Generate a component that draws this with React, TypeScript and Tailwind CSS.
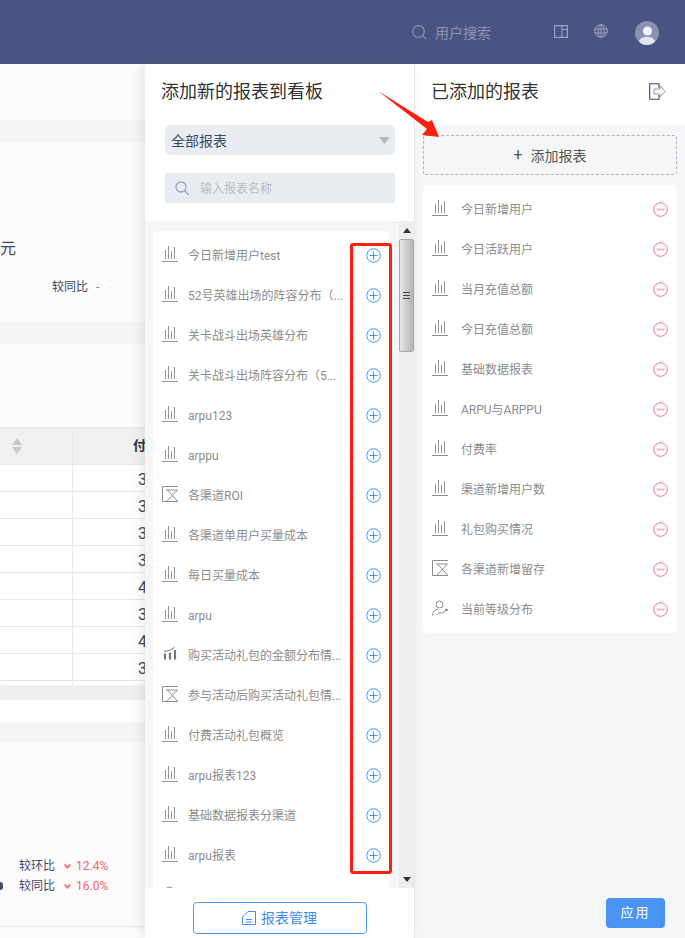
import React from "react";

const font = { fontFamily: 'Roboto, "Noto Sans CJK SC", sans-serif' };

const Bars = () => (
  <svg width="16" height="16" viewBox="0 0 16 16" fill="none" stroke="#949494" strokeWidth="1" className="mb-[2px] shrink-0">
    <path d="M0 15.5H16M3.5 4V13M6.5 0V13M9.5 5V13M12.5 1V13" />
  </svg>
);
const Hourglass = () => (
  <svg width="16" height="16" viewBox="0 0 16 16" fill="none" stroke="#8c8c8c" strokeWidth="1" className="mb-[2px] shrink-0">
    <path d="M16 .5H.5V15.5H16M4 4H15.5M5.5 4L15.5 15M15.5 4L5 15" />
  </svg>
);
const SmallBars = () => (
  <svg width="16" height="16" viewBox="0 0 16 16" fill="none" className="mb-[2px] shrink-0">
    <path d="M3 7.5V13.5M8 6.5V13.5M13 4V13.5" stroke="#777" strokeWidth="2.2" />
    <path d="M2 5.5C6 5 9 4 12.5 1.5" stroke="#777" strokeWidth="1" />
  </svg>
);
const Person = () => (
  <svg width="16" height="16" viewBox="0 0 16 16" fill="none" stroke="#8c8c8c" strokeWidth="1" className="mb-[2px] shrink-0">
    <circle cx="7.5" cy="4.5" r="3.5" />
    <path d="M.5 15.5C.8 11.5 3 9.5 6 9" />
    <path d="M5 15L8 12L10 13.5L13.5 10.5" />
    <circle cx="14.5" cy="10" r="1" fill="#8c8c8c" />
  </svg>
);

const AddIcon = () => (
  <svg width="15" height="15" viewBox="0 0 15 15" fill="none" stroke="#3f95ff" className="shrink-0">
    <circle cx="7.5" cy="7.5" r="6.8" />
    <path d="M3.5 7.5H11.5M7.5 3.5V11.5" strokeWidth="1.2" />
  </svg>
);
const RemoveIcon = () => (
  <svg width="15" height="15" viewBox="0 0 15 15" fill="none" className="shrink-0">
    <circle cx="7.5" cy="7.5" r="6.8" stroke="#fb7478" />
    <path d="M3.5 7.5H11.5" stroke="#fba9ab" strokeWidth="1.6" />
  </svg>
);
const Chevron = () => (
  <svg width="7" height="5" viewBox="0 0 7 5" className="shrink-0">
    <path d="M0 1L1.2 0L3.5 2.2L5.8 0L7 1L3.5 5Z" fill="#f5656a" />
  </svg>
);

type Row = { text: string; icon: React.ReactNode };
const left: Row[] = [
  { text: "今日新增用户test", icon: <Bars /> },
  { text: "52号英雄出场的阵容分布（...", icon: <Bars /> },
  { text: "关卡战斗出场英雄分布", icon: <Bars /> },
  { text: "关卡战斗出场阵容分布（5...", icon: <Bars /> },
  { text: "arpu123", icon: <Bars /> },
  { text: "arppu", icon: <Bars /> },
  { text: "各渠道ROI", icon: <Hourglass /> },
  { text: "各渠道单用户买量成本", icon: <Bars /> },
  { text: "每日买量成本", icon: <Bars /> },
  { text: "arpu", icon: <Bars /> },
  { text: "购买活动礼包的金额分布情...", icon: <SmallBars /> },
  { text: "参与活动后购买活动礼包情...", icon: <Hourglass /> },
  { text: "付费活动礼包概览", icon: <Bars /> },
  { text: "arpu报表123", icon: <Bars /> },
  { text: "基础数据报表分渠道", icon: <Bars /> },
  { text: "arpu报表", icon: <Bars /> },
  { text: "", icon: <Person /> },
];
const right: Row[] = [
  { text: "今日新增用户", icon: <Bars /> },
  { text: "今日活跃用户", icon: <Bars /> },
  { text: "当月充值总额", icon: <Bars /> },
  { text: "今日充值总额", icon: <Bars /> },
  { text: "基础数据报表", icon: <Bars /> },
  { text: "ARPU与ARPPU", icon: <Bars /> },
  { text: "付费率", icon: <Bars /> },
  { text: "渠道新增用户数", icon: <Bars /> },
  { text: "礼包购买情况", icon: <Bars /> },
  { text: "各渠道新增留存", icon: <Hourglass /> },
  { text: "当前等级分布", icon: <Person /> },
];
const nums = ["3", "3", "3", "3", "4", "3", "4", "3"];

function Background() {
  return (
    <div className="w-[145px] shrink-0 overflow-hidden bg-[#fbfbfc] text-[12px] text-[#3d4a66]">
      <div className="h-[56px]" />
      <div className="h-[22px] bg-[#f5f5f6]" />
      <div className="flex h-[180px] flex-col">
        <div className="mt-[95px] h-[24px] text-[16px] leading-[24px] text-[#3d4a66]">元</div>
        <div className="mt-[18px] flex items-center pl-[52px] leading-[16px]">
          较同比<span className="ml-[8px] text-[#2fb574]">-</span>
        </div>
      </div>
      <div className="h-[22px] bg-[#f5f5f6]" />
      <div className="h-[83px]" />
      <div className="flex h-[38px] border-y border-[#e8e8e8] bg-[#f0f0f0]">
        <div className="flex w-[73px] items-center justify-start border-r border-[#e8e8e8] pl-[12px]">
          <svg width="10" height="16" viewBox="0 0 10 16"><path d="M0 7L5 0L10 7ZM0 9H10L5 16Z" fill="#c8c8c8" /></svg>
        </div>
        <div className="flex w-[72px] items-center justify-end whitespace-nowrap text-[13px] font-bold text-[#333]">
          <span className="mr-[-1px]">付</span>
        </div>
      </div>
      {nums.map((n, i) => (
        <div key={i} className="flex h-[27px] border-b border-[#e8e8e8] bg-white">
          <div className="w-[73px] border-r border-[#e8e8e8]" />
          <div className="flex w-[72px] items-center justify-end pt-[4px] text-[16px] text-[#3d4a66]">
            <span className="mr-[-2px]">{n}</span>
          </div>
        </div>
      ))}
      <div className="flex h-[4px] bg-white shadow-[0_2px_4px_rgba(0,0,0,0.15)]">
        <div className="w-[73px] border-r border-[#e8e8e8]" />
      </div>
      <div className="h-[15px] bg-[#efefef]" />
      <div className="h-[22px] bg-[#fdfdfd]" />
      <div className="h-[20px] bg-[#f5f5f6]" />
      <div className="flex h-[185px] flex-col border-b border-[#e3ebf8]">
        <div className="mt-[114px] flex h-[20px] items-center pl-[19px]">
          <span className="w-[45px]">较环比</span>
          <Chevron />
          <span className="ml-[5px] text-[#f5656a]">12.4%</span>
        </div>
        <div className="flex h-[20px] items-center">
          <span className="mr-[16px] h-[8px] w-[3px] rounded-r-full bg-[#3d4a66]" />
          <span className="w-[45px]">较同比</span>
          <Chevron />
          <span className="ml-[5px] text-[#f5656a]">16.0%</span>
        </div>
      </div>
    </div>
  );
}

function Scrollbar() {
  return (
    <div className="flex w-[15px] shrink-0 flex-col items-center bg-[#eeeeee]">
      <div className="flex h-[18px] items-center justify-center text-[0]">
        <svg width="8" height="5" viewBox="0 0 8 5"><path d="M0 5L4 0L8 5Z" fill="#333" /></svg>
      </div>
      <div className="flex h-[113px] w-[15px] items-center justify-center rounded-[2px] border border-[#a8a8a8] bg-[linear-gradient(90deg,#e8e8e8,#d0d0d0_45%,#b4b4b4)]">
        <svg width="7" height="7" viewBox="0 0 7 7" stroke="#444"><path d="M0 .5H7M0 3.5H7M0 6.5H7" /></svg>
      </div>
      <div className="flex-1" />
      <div className="mb-[2px] flex h-[14px] items-center justify-center text-[0]">
        <svg width="8" height="5" viewBox="0 0 8 5"><path d="M0 0L4 5L8 0Z" fill="#333" /></svg>
      </div>
    </div>
  );
}

function MiddlePanel() {
  return (
    <div className="z-10 flex w-[270px] shrink-0 flex-col overflow-hidden border-r border-[#e6e6e6] bg-white shadow-[-4px_0_10px_rgba(0,0,0,0.08)]">
      <div className="flex h-[157px] shrink-0 flex-col pl-[16px] pr-[15px]">
        <div className="mt-[15px] h-[26px] text-[18px] leading-[26px] text-[#333]">添加新的报表到看板</div>
        <div className="mx-[4px] mt-[20px] flex h-[30px] items-center justify-between rounded-[5px] bg-[#e9ecf0] pl-[6px] pr-[5px] text-[14px] text-[#3d4a66]">
          <span className="pt-[2px]">全部报表</span>
          <svg width="11" height="7" viewBox="0 0 11 7"><path d="M0 0H11L5.5 7Z" fill="#b4b8be" /></svg>
        </div>
        <div className="mx-[4px] mt-[18px] flex h-[30px] items-center gap-[10px] rounded-[2px] bg-[#e9ecf0] pl-[10px] text-[12px] text-[#b9bcc2]">
          <svg width="15" height="15" viewBox="0 0 15 15" fill="none" stroke="#95a7c6" strokeWidth="1.3"><circle cx="6" cy="6" r="5" /><path d="M9.8 9.8L14 14" /></svg>
          <span className="pt-[2px]">输入报表名称</span>
        </div>
      </div>
      <div className="flex h-[667px] shrink-0 overflow-hidden bg-[#f5f6f8] pl-[8px]">
        <div className="mr-[10px] mt-[10px] w-[236px] shrink-0 rounded-t-[5px] bg-white pt-[4px]">
          {left.map((r, i) => (
            <div key={i} className="flex h-[40px] items-center pl-[9px]">
              {r.icon}
              <span className="ml-[10px] w-[160px] whitespace-nowrap pt-[2px] text-[12px] text-[#8c8c8c]">{r.text}</span>
              {i < 16 && <span className="ml-[18px] flex"><AddIcon /></span>}
            </div>
          ))}
        </div>
        <Scrollbar />
      </div>
      <div className="flex flex-1 items-start justify-center pt-[14px]">
        <div className="flex h-[32px] w-[174px] items-center justify-center gap-[5px] rounded-[4px] border border-[#4d9bf8] text-[14px] text-[#3d8df2]">
          <svg width="14" height="14" viewBox="0 0 14 14" fill="none" stroke="#3d8df2"><path d="M.5 13.5V6L6 .5H13.5V13.5ZM4 8.5H10M4 11H10" /></svg>
          报表管理
        </div>
      </div>
    </div>
  );
}

function RightPanel() {
  return (
    <div className="flex w-[270px] shrink-0 flex-col bg-[#f5f6f8]">
      <div className="flex h-[61px] shrink-0 items-start justify-between bg-white pl-[16px] pr-[19px] pt-[15px]">
        <span className="text-[18px] leading-[26px] text-[#333]">已添加的报表</span>
        <svg width="17" height="17" viewBox="0 0 17 17" fill="none" className="mt-[4px]" stroke="#3d4a66">
          <path d="M10 5V.7H.7V16.3H10V12" strokeWidth="1.1" />
          <path d="M5 6H11V2.5L16 8.5L11 14V11H5Z" stroke="#8d96a8" />
        </svg>
      </div>
      <div className="mx-[8px] mt-[10px] flex h-[40px] shrink-0 items-center justify-center gap-[8px] rounded-[3px] border border-dashed border-[#b2b4b9] text-[14px] text-[#555]">
        <span className="text-[16px] leading-none">+</span>
        <span className="pt-[2px]">添加报表</span>
      </div>
      <div className="mx-[8px] mt-[10px] rounded-[5px] bg-white py-[4px]">
        {right.map((r, i) => (
          <div key={i} className="flex h-[40px] items-center justify-between pl-[9px] pr-[9px]">
            <div className="flex items-center gap-[13px]">
              {r.icon}
              <span className="pt-[2px] text-[12px] text-[#8c8c8c]">{r.text}</span>
            </div>
            <RemoveIcon />
          </div>
        ))}
      </div>
      <div className="flex-1" />
      <div className="mb-[10px] mr-[20px] flex justify-end">
        <div className="flex h-[30px] w-[59px] items-center justify-center rounded-[4px] bg-[#4a94f1] text-[13px] tracking-[2px] text-white">应用</div>
      </div>
    </div>
  );
}

export default function App() {
  return (
    <div className="relative flex h-screen w-[685px] flex-col overflow-hidden bg-white" style={font}>
      <header className="flex h-[64px] shrink-0 items-center bg-[#4a5482] pl-[412px] text-[#8a92b8]">
        <svg width="15" height="15" viewBox="0 0 15 15" fill="none" stroke="#8a92b8" strokeWidth="1.2"><circle cx="6.5" cy="6.5" r="5.8" /><path d="M10.8 10.8L14 14" /></svg>
        <span className="ml-[8px] pt-[2px] text-[14px]">用户搜索</span>
        <svg className="mb-[2px] ml-[63px]" width="14" height="13" viewBox="0 0 14 13" fill="none" stroke="#9aa1c2" strokeWidth="1.2"><path d="M.6.6H13.4V12.4H.6ZM8 .6V12.4M8 4.5H13.4" /></svg>
        <svg className="mb-[2px] ml-[26px]" width="14" height="14" viewBox="0 0 14 14" fill="none" stroke="#9aa1c2"><circle cx="7" cy="7" r="6.3" /><ellipse cx="7" cy="7" rx="3" ry="6.3" /><path d="M.7 5H13.3M.7 9H13.3M7 .7V13.3" /></svg>
        <svg className="ml-[27px] mt-[2px]" width="24" height="24" viewBox="0 0 24 24">
          <circle cx="12" cy="12" r="12" fill="#8a90b1" />
          <ellipse cx="12.5" cy="10" rx="4.5" ry="4.5" fill="#f0f3f8" />
          <path d="M4 20C6 16 9 16 12 16S18 16 20 20C18 23 15 24 12 24S6 23 4 20Z" fill="#dfe7f2" />
        </svg>
      </header>
      <div className="flex min-h-0 flex-1">
        <Background />
        <MiddlePanel />
        <RightPanel />
      </div>
      <div className="pointer-events-none absolute left-[350px] top-[243px] z-20 h-[631px] w-[42px] rounded-[3px] border-[3px] border-[#ff1f10]" />
      <svg className="pointer-events-none absolute left-[370px] top-[85px] z-20" width="75" height="60" viewBox="0 0 75 60">
        <path d="M8 6L58 37L62 35L69 52L52 50L57 44Z" fill="#ff1f10" />
      </svg>
    </div>
  );
}
